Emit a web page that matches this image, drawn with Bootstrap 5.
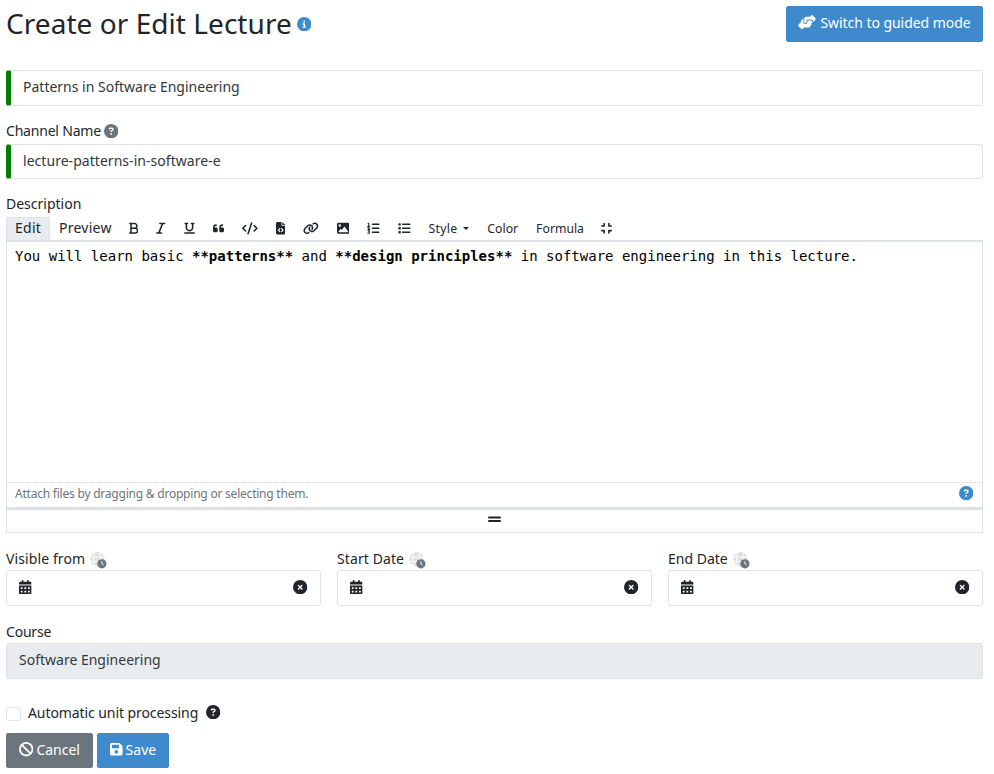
<!DOCTYPE html>
<html lang="en">
<head>
<meta charset="utf-8">
<meta name="viewport" content="width=device-width, initial-scale=1">
<title>Create or Edit Lecture</title>
<link href="https://cdn.jsdelivr.net/npm/bootstrap@5.3.0/dist/css/bootstrap.min.css" rel="stylesheet">
<style>
body{font-family:"Noto Sans",sans-serif;font-size:14px;line-height:21px;color:#212529;padding:6px 11px 0 6px;overflow:hidden}
svg{display:block;fill:currentColor;flex:none}
.ic{height:14.4px}
.page-head{height:36px;margin-bottom:28px}
.page-head h2{font-size:28px;line-height:34px;padding-bottom:2px;letter-spacing:.05px}
.title-info{margin-left:5px}
.text-info-blue{color:#3e8acc}
.btn{--bs-btn-font-size:14px;--bs-btn-line-height:21px;--bs-btn-padding-y:0;--bs-btn-border-radius:2px;height:35px;padding-bottom:2px}
.btn-primary{--bs-btn-bg:#3e8acc;--bs-btn-border-color:#3e8acc}
.page-head .btn{height:36px;width:197px;padding-bottom:3px;letter-spacing:-.05px}
.form-control{font-size:14px;line-height:21px;height:36px;border-color:#dee2e6;border-radius:3px;color:#33383d;padding:4px 12px 8px}
.valid-bar{border-left:5px solid green}
.form-control:disabled{background:#e9ecef;opacity:1}
.h-35{height:35px;padding:5px 12px 7px;letter-spacing:.04px}
.field-label{margin-top:15px;height:22px;line-height:22px}
.field-label.tall{margin-top:14px;height:22px;margin-bottom:2px}
.tools{height:23px;line-height:23px}
.tools>*{padding:0 9px;height:23px}
.tools .tab-on{width:44px;background:#e9ecef;border:1px solid #dee2e6;border-bottom:0;border-radius:2px 2px 0 0;padding-left:8px;line-height:20px}
.tools .tab-off{line-height:22px;width:70px;letter-spacing:.25px}
.tools svg{height:12.6px}
.tools .word{font-size:12.25px}
.caret{border:3px solid transparent;border-top-color:#212529;border-bottom:0;margin-left:6px}
.editor{border:1px solid #dee2e6;border-top-width:2px;border-bottom:3px solid #dee2e6;height:270px}
.code-area{height:241px;background:#fffffe;border-bottom:1px dotted #d5d8dc;font:14px/19px "DejaVu Sans Mono",monospace;color:#000;padding:5px 8px;white-space:pre}
.drop-hint{height:24px;font-size:12px;letter-spacing:-.22px;color:#6c757d;padding:0 9px 3px 8px}
.grip{border:1px solid #dee2e6;border-top:0;height:23px;padding-bottom:4px}
.dates{display:grid;grid-template-columns:repeat(3,1fr);column-gap:16px}
.date-box{padding:0 12.5px 2px 12px}
.zone{width:17px;height:17px;margin:3px 0 0 5px}
.check-row{margin-top:22px;height:22px}
.tick{width:15px;height:14px;margin:4px 7px 0 0;border:1px solid #dee2e6;border-radius:3px;appearance:none;background:#fff}
.actions{margin-top:10px;gap:4px}
.actions .btn-secondary{width:87px}
.actions .btn-primary{width:72px}
.t1{letter-spacing:-.2px}.t2{letter-spacing:.25px}.t3{letter-spacing:.1px}.t4{letter-spacing:-.08px}
</style>
</head>
<body>
<svg width="0" height="0" class="position-absolute">
<symbol id="info" viewBox="0 0 512 512"><path d="M256 512A256 256 0 1 0 256 0a256 256 0 1 0 0 512zM216 336h24V272H216c-13.3 0-24-10.7-24-24s10.7-24 24-24h48c13.3 0 24 10.7 24 24v88h8c13.3 0 24 10.7 24 24s-10.7 24-24 24H216c-13.3 0-24-10.7-24-24s10.7-24 24-24zm40-208a32 32 0 1 1 0 64 32 32 0 1 1 0-64z"/></symbol>
<symbol id="help" viewBox="0 0 512 512"><path d="M256 512A256 256 0 1 0 256 0a256 256 0 1 0 0 512zM169.800 165.300c7.900-22.300 29.100-37.300 52.800-37.300h58.300c34.900 0 63.100 28.300 63.100 63.100c0 22.600-12.100 43.500-31.700 54.800L280 264.400c-.2 13-10.900 23.600-24 23.600c-13.300 0-24-10.700-24-24V250.500c0-8.600 4.600-16.500 12.100-20.800l44.300-25.400c4.700-2.700 7.600-7.700 7.600-13.100c0-8.400-6.800-15.100-15.100-15.100H222.600c-3.400 0-6.400 2.100-7.500 5.300l-.4 1.200c-4.400 12.500-18.200 19-30.600 14.600s-19-18.200-14.600-30.600l.4-1.200zM224 352a32 32 0 1 1 64 0 32 32 0 1 1 -64 0z"/></symbol>
<symbol id="clear" viewBox="0 0 512 512"><path d="M256 512A256 256 0 1 0 256 0a256 256 0 1 0 0 512zM175 175c9.400-9.400 24.600-9.400 33.900 0l47 47 47-47c9.400-9.400 24.600-9.400 33.900 0s9.400 24.600 0 33.900l-47 47 47 47c9.400 9.400 9.400 24.600 0 33.900s-24.600 9.400-33.900 0l-47-47-47 47c-9.400 9.400-24.600 9.400-33.900 0s-9.400-24.600 0-33.900l47-47-47-47c-9.400-9.400-9.400-24.600 0-33.900z"/></symbol>
<symbol id="cal" viewBox="0 0 448 512"><path fill-rule="evenodd" d="M128 0c17.700 0 32 14.300 32 32V64H288V32c0-17.700 14.300-32 32-32s32 14.300 32 32V64h48c26.500 0 48 21.500 48 48v48H0V112C0 85.500 21.500 64 48 64H96V32c0-17.700 14.300-32 32-32zM0 192H448V464c0 26.500-21.500 48-48 48H48c-26.500 0-48-21.500-48-48V192zM64 256v64h64v-64zM192 256v64h64v-64zM320 256v64h64v-64zM64 384v64h64v-64zM192 384v64h64v-64zM320 384v64h64v-64z"/></symbol>
<symbol id="zone" viewBox="0 0 17 17"><circle cx="7.300" cy="7.200" r="7.200" fill="#e0e0e0"/><path d="M0 5h15M0 9.500h15M4.500 0c-1 4-1 10 0 14M10 0c1 4 1 10 0 14" fill="none" stroke="#fff" stroke-width=".9"/><circle cx="11.900" cy="11.800" r="4.600" fill="#6c757d"/><path d="M11.900 9.200v2.700l1.700 1.100" fill="none" stroke="#fff" stroke-width=".9"/></symbol>
</svg>

<header class="page-head d-flex justify-content-between">
  <div class="d-flex align-items-center">
    <h2 class="mb-0 fw-normal">Create or Edit Lecture</h2>
    <svg class="ic text-info-blue title-info" width="14.4"><use href="#info"/></svg>
  </div>
  <button class="btn btn-primary d-flex align-items-center px-0 justify-content-center" type="button"><svg class="me-1 ic" width="18" viewBox="0 0 640 512"><path d="M544 248v3.300l69.700-69.700c21.900-21.900 21.900-57.300 0-79.200L535.600 24.400c-21.900-21.900-57.300-21.900-79.200 0L416.300 64.500c-2.700-.3-5.500-.5-8.300-.5H296c-37.100 0-67.600 28-71.600 64H224V248c0 22.100 17.900 40 40 40s40-17.900 40-40V160H464c44.200 0 80 35.800 80 80v8zM336 192v56c0 39.800-32.200 72-72 72s-72-32.200-72-72V129.400c-35.900 6.200-65.800 32.300-76 68.200L99.500 255.200 26.300 328.400c-21.900 21.900-21.900 57.300 0 79.200l78.100 78.100c21.900 21.900 57.300 21.900 79.200 0l37.700-37.700c.9 0 1.800 .1 2.700 .1H384c26.500 0 48-21.500 48-48c0-5.600-1-11-2.700-16H432c26.500 0 48-21.500 48-48c0-12.800-5-24.400-13.200-33c25.700-5 45.100-27.600 45.200-54.800v-.4c-.1-30.800-25.100-55.800-56-55.800z"/></svg>Switch to guided mode</button>
</header>

<form>
  <input class="form-control valid-bar" aria-label="Title" value="Patterns in Software Engineering">
  <label class="field-label tall d-flex align-items-center t1">Channel Name<svg class="ic text-secondary" style="margin-left:3px" width="14.4"><use href="#help"/></svg></label>
  <input class="form-control valid-bar h-35" aria-label="Channel Name" value="lecture-patterns-in-software-e">
  <label class="field-label tall d-flex align-items-center">Description</label>

  <div class="tools d-flex">
    <span class="tab-on t2">Edit</span><span class="tab-off">Preview</span>
    <span class="d-flex align-items-center"><svg width="9.450" viewBox="0 0 384 512"><path d="M0 64C0 46.300 14.300 32 32 32H224c70.700 0 128 57.300 128 128c0 31.300-11.300 60.100-30 82.300c37.100 22.400 62 63.100 62 109.700c0 70.700-57.300 128-128 128H32c-17.700 0-32-14.300-32-32s14.300-32 32-32H48V96H32C14.300 96 0 81.700 0 64zM224 224c35.300 0 64-28.700 64-64s-28.700-64-64-64H112V224H224zM112 288V416H256c35.300 0 64-28.700 64-64s-28.700-64-64-64z"/></svg></span>
    <span class="d-flex align-items-center"><svg width="9.450" viewBox="0 0 384 512"><path d="M128 64c0-17.700 14.300-32 32-32H352c17.700 0 32 14.300 32 32s-14.300 32-32 32H293.300L160 416h64c17.700 0 32 14.300 32 32s-14.300 32-32 32H32c-17.700 0-32-14.300-32-32s14.300-32 32-32H90.700L224 96H160c-17.700 0-32-14.300-32-32z"/></svg></span>
    <span class="d-flex align-items-center"><svg width="11" viewBox="0 0 448 512"><path d="M16 64c0-17.700 14.300-32 32-32h96c17.700 0 32 14.300 32 32s-14.300 32-32 32H128V224c0 53 43 96 96 96s96-43 96-96V96H304c-17.700 0-32-14.300-32-32s14.300-32 32-32h96c17.700 0 32 14.300 32 32s-14.300 32-32 32H384V224c0 88.400-71.600 160-160 160s-160-71.600-160-160V96H48C30.300 96 16 81.700 16 64zM0 448c0-17.700 14.300-32 32-32H416c17.700 0 32 14.300 32 32s-14.300 32-32 32H32c-17.700 0-32-14.300-32-32z"/></svg></span>
    <span class="d-flex align-items-center"><svg width="11" viewBox="0 0 448 512"><path d="M0 216C0 149.700 53.700 96 120 96h8c17.700 0 32 14.300 32 32s-14.300 32-32 32h-8c-30.900 0-56 25.100-56 56v8h64c35.300 0 64 28.700 64 64v64c0 35.300-28.700 64-64 64H64c-35.300 0-64-28.700-64-64zM256 216c0-66.300 53.700-120 120-120h8c17.700 0 32 14.300 32 32s-14.300 32-32 32h-8c-30.900 0-56 25.100-56 56v8h64c35.300 0 64 28.700 64 64v64c0 35.300-28.700 64-64 64H320c-35.300 0-64-28.700-64-64z"/></svg></span>
    <span class="d-flex align-items-center"><svg width="15.750" viewBox="0 0 640 512"><path d="M392 40L248 472M145 145L34 256L145 367M495 145L606 256L495 367" fill="none" stroke="currentColor" stroke-width="64" stroke-linecap="round" stroke-linejoin="round"/></svg></span>
    <span class="d-flex align-items-center"><svg width="9.450" viewBox="0 0 384 512"><path d="M64 0C28.700 0 0 28.700 0 64V448c0 35.300 28.700 64 64 64H320c35.300 0 64-28.700 64-64V160H256c-17.700 0-32-14.300-32-32V0zM256 0V128H384z"/><path d="M153 265L97 329L153 393M231 265L287 329L231 393" fill="none" stroke="#fff" stroke-width="48" stroke-linecap="round" stroke-linejoin="round"/></svg></span>
    <span class="d-flex align-items-center"><svg width="15.750" viewBox="0 0 640 512"><path d="M579.800 267.700c56.500-56.500 56.500-148 0-204.500c-50-50-128.800-56.500-186.300-15.400l-1.600 1.100c-14.400 10.300-17.700 30.300-7.400 44.600s30.300 17.700 44.600 7.400l1.600-1.100c32.100-22.900 76-19.300 103.800 8.600c31.500 31.500 31.500 82.500 0 114L422.300 334.800c-31.500 31.500-82.500 31.500-114 0c-27.900-27.900-31.500-71.800-8.600-103.800l1.100-1.600c10.300-14.400 6.900-34.400-7.400-44.600s-34.400-6.900-44.600 7.400l-1.100 1.600C206.500 251.200 213 330 263 380c56.500 56.500 148 56.500 204.500 0zM60.200 244.300c-56.500 56.500-56.500 148 0 204.500c50 50 128.800 56.500 186.300 15.400l1.600-1.100c14.400-10.300 17.700-30.300 7.400-44.600s-30.300-17.700-44.600-7.400l-1.600 1.100c-32.100 22.900-76 19.300-103.800-8.600C74 372 74 321 105.500 289.500L217.700 177.200c31.500-31.500 82.500-31.500 114 0c27.900 27.900 31.500 71.800 8.600 103.900l-1.100 1.600c-10.300 14.400-6.900 34.400 7.400 44.600s34.400 6.900 44.600-7.400l1.100-1.600C433.500 260.800 427 182 377 132c-56.500-56.500-148-56.500-204.500 0z"/></svg></span>
    <span class="d-flex align-items-center"><svg width="12.600" viewBox="0 0 512 512"><path d="M0 96C0 60.700 28.700 32 64 32H448c35.300 0 64 28.700 64 64V416c0 35.300-28.700 64-64 64H64c-35.300 0-64-28.700-64-64V96zM323.800 202.500c-4.500-6.600-11.900-10.500-19.800-10.500s-15.400 3.900-19.800 10.500l-87 127.600L170.700 297c-4.600-5.700-11.500-9-18.700-9s-14.200 3.300-18.700 9l-64 80c-5.800 7.200-6.900 17.100-2.900 25.400s12.400 13.600 21.600 13.600H424c8.900 0 17.100-4.900 21.200-12.800s3.600-17.400-1.400-24.700zM112 192a48 48 0 1 0 0-96 48 48 0 1 0 0 96z"/></svg></span>
    <span class="d-flex align-items-center"><svg width="12.600" viewBox="0 0 512 512"><g fill="none" stroke="currentColor" stroke-linecap="round"><path stroke-width="60" d="M224 96H480M224 256H480M224 416H480"/><path stroke-width="42" stroke-linejoin="round" d="M40 55H70V168M30 170H110M35 220Q75 185 92 220Q98 240 38 300H110M38 352H105L72 395Q115 395 105 440Q90 470 32 450"/></g></svg></span>
    <span class="d-flex align-items-center"><svg width="12.600" viewBox="0 0 512 512"><path d="M192 96H480M192 256H480M192 416H480" fill="none" stroke="currentColor" stroke-width="62" stroke-linecap="round"/><rect x="16" y="48" width="96" height="96" rx="24"/><rect x="16" y="208" width="96" height="96" rx="24"/><rect x="16" y="368" width="96" height="96" rx="24"/></svg></span>
    <span class="word d-flex align-items-center t2">Style<i class="caret"></i></span>
    <span class="word">Color</span><span class="word">Formula</span>
    <span class="d-flex align-items-center ps-2"><svg width="11" viewBox="0 0 448 512"><path d="M128 64V160H32M320 64V160H416M32 352H128V448M416 352H320V448" fill="none" stroke="currentColor" stroke-width="64" stroke-linecap="round" stroke-linejoin="round"/></svg></span>
  </div>
  <div class="editor">
    <div class="code-area">You will learn basic <b>**patterns**</b> and <b>**design principles**</b> in software engineering in this lecture.</div>
    <div class="drop-hint d-flex align-items-center justify-content-between"><span>Attach files by dragging &amp; dropping or selecting them.</span><svg class="ic text-info-blue" width="14.4"><use href="#help"/></svg></div>
  </div>
  <div class="grip d-flex align-items-center justify-content-center"><svg width="13" height="7" viewBox="0 0 13 7"><rect width="13" height="2" y=".5" rx="1"/><rect width="13" height="2" y="4" rx="1"/></svg></div>

  <div class="dates">
    <div><label class="field-label d-flex align-items-center t3">Visible from<svg class="zone"><use href="#zone"/></svg></label>
      <div class="form-control date-box d-flex align-items-center justify-content-between text-body"><svg class="ic" width="12.6"><use href="#cal"/></svg><svg class="ic" width="14.4"><use href="#clear"/></svg></div></div>
    <div><label class="field-label d-flex align-items-center t3">Start Date<svg class="zone"><use href="#zone"/></svg></label>
      <div class="form-control date-box d-flex align-items-center justify-content-between text-body"><svg class="ic" width="12.6"><use href="#cal"/></svg><svg class="ic" width="14.4"><use href="#clear"/></svg></div></div>
    <div><label class="field-label d-flex align-items-center">End Date<svg class="zone"><use href="#zone"/></svg></label>
      <div class="form-control date-box d-flex align-items-center justify-content-between text-body"><svg class="ic" width="12.6"><use href="#cal"/></svg><svg class="ic" width="14.4"><use href="#clear"/></svg></div></div>
  </div>

  <label class="field-label d-flex align-items-center t1">Course</label>
  <input class="form-control" aria-label="Course" value="Software Engineering" disabled>

  <div class="check-row d-flex align-items-center">
    <input class="tick" type="checkbox" id="auto"><label for="auto" class="t4">Automatic unit processing</label>
    <svg class="ic ms-2" width="14.4"><use href="#help"/></svg>
  </div>
  <div class="actions d-flex">
    <button type="button" class="btn btn-secondary d-flex align-items-center"><svg class="ic" style="margin-right:3px" width="14.4" viewBox="0 0 512 512"><path d="M91 91L421 421M480 256A224 224 0 1 1 32 256A224 224 0 1 1 480 256" fill="none" stroke="currentColor" stroke-width="64"/></svg>Cancel</button>
    <button type="button" class="btn btn-primary d-flex align-items-center"><svg class="ic" style="margin-right:3px" width="12.6" viewBox="0 0 448 512"><path d="M64 32C28.700 32 0 60.700 0 96V416c0 35.300 28.700 64 64 64H384c35.300 0 64-28.700 64-64V173.300c0-17-6.700-33.300-18.700-45.300L352 50.700C340 38.700 323.700 32 306.700 32H64zm0 96c0-17.700 14.300-32 32-32H288c17.700 0 32 14.300 32 32v64c0 17.700-14.300 32-32 32H96c-17.700 0-32-14.300-32-32V128zM224 288a64 64 0 1 1 0 128 64 64 0 1 1 0-128z"/></svg>Save</button>
  </div>
</form>
<script src="https://cdn.jsdelivr.net/npm/bootstrap@5.3.0/dist/js/bootstrap.bundle.min.js"></script>
</body>
</html>
